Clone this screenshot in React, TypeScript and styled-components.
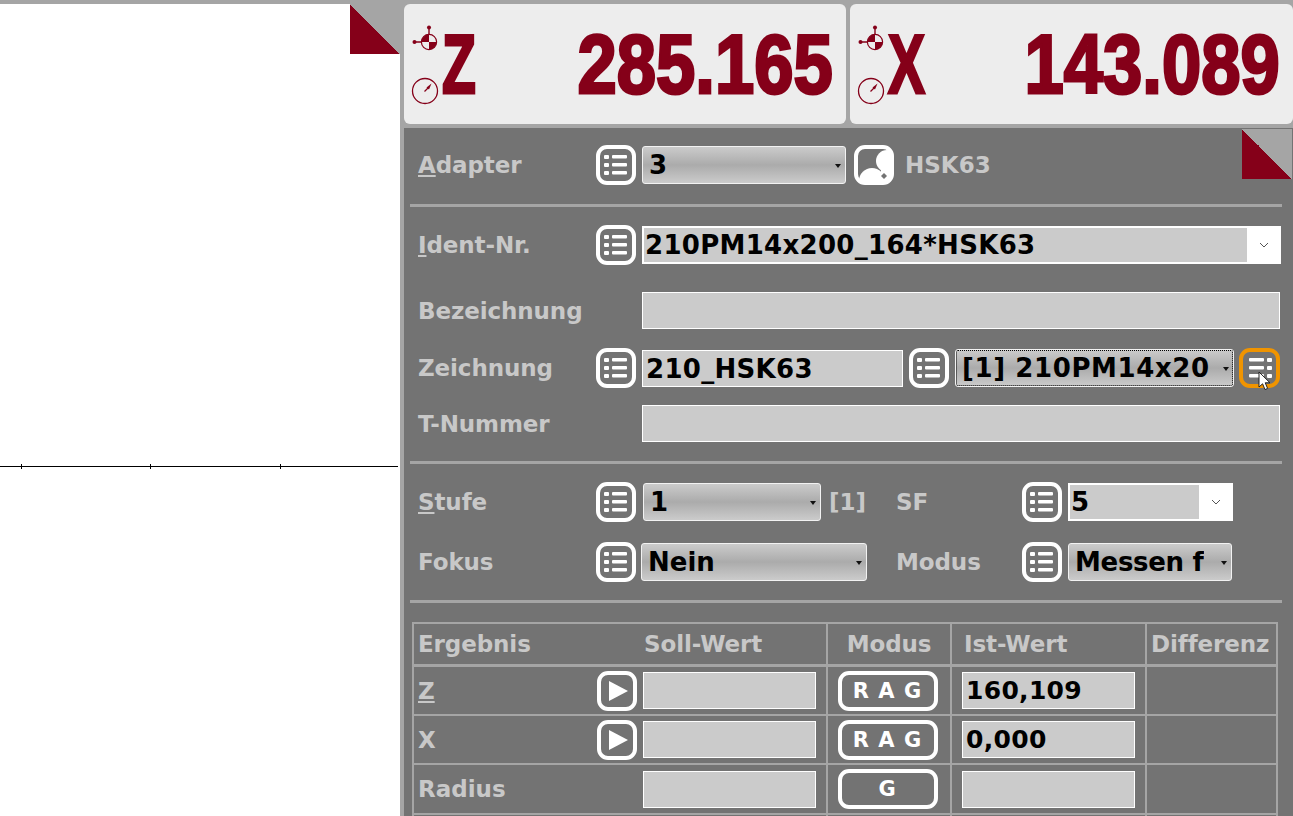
import React from 'react';
import styled, { createGlobalStyle } from 'styled-components';

const GlobalStyle = createGlobalStyle`
    html, body {
        margin: 0;
        height: 816px;
        overflow: hidden;
        background: #a5a5a5;
    }
    * {
        box-sizing: border-box;
    }
`;

const RED = '#850019';
const TEXT = '#c8c8c8';
const LINE = '#a5a5a5';
const FONT = '"DejaVu Sans", Verdana, sans-serif';

const ListIcon = ({ mirrored }: { mirrored?: boolean }) => (
    <svg width="24" height="20" viewBox="0 0 24 20" fill="#fff">
        <g transform={mirrored ? 'translate(24 0) scale(-1 1)' : undefined}>
            <rect x="0" y="0" width="5" height="4" rx="1" />
            <rect x="0" y="8" width="5" height="4" rx="1" />
            <rect x="0" y="16" width="5" height="4" rx="1" />
            <rect x="8" y="0" width="15" height="3.5" rx="1" />
            <rect x="8" y="8" width="15" height="3.5" rx="1" />
            <rect x="8" y="16" width="15" height="3.5" rx="1" />
        </g>
    </svg>
);

const ChevronDown = () => (
    <svg width="10" height="6" viewBox="0 0 10 6">
        <path d="M1 1L5 5L9 1" fill="none" stroke="#555" strokeWidth="1" />
    </svg>
);

const Crosshair = () => (
    <svg width="34" height="34" viewBox="0 0 34 34">
        <circle cx="17" cy="17" r="7.6" fill="none" stroke={RED} strokeWidth="1.2" />
        <path d="M17 17V9.4A7.6 7.6 0 0 0 9.4 17Z" fill={RED} />
        <path d="M17 17V24.6A7.6 7.6 0 0 0 24.6 17Z" fill={RED} />
        <path d="M17 9V2M9 17H2" stroke={RED} strokeWidth="1.4" />
        <circle cx="17" cy="2.5" r="2" fill={RED} />
        <circle cx="2.5" cy="17" r="2" fill={RED} />
    </svg>
);

const Gauge = () => (
    <svg width="28" height="28" viewBox="0 0 28 28">
        <circle cx="14" cy="14" r="12.5" fill="none" stroke={RED} strokeWidth="1.3" />
        <path d="M13.5 14.5L17 11" stroke={RED} strokeWidth="1.2" />
        <path d="M15.5 10.5L20.5 6.5L18 12.5Z" fill={RED} />
    </svg>
);

const Cursor = () => (
    <svg width="14" height="20" viewBox="0 0 14 20">
        <path d="M1 1V16L4.6 12.8L7 18.6L9.6 17.4L7.2 11.8H12Z" fill="#fff" stroke="#222" strokeWidth="1" />
    </svg>
);

const HolderIcon = () => (
    <svg width="40" height="40" viewBox="0 0 40 40">
        <defs>
            <clipPath id="holder-clip">
                <rect x="2" y="2" width="36" height="36" rx="9" />
            </clipPath>
        </defs>
        <g clipPath="url(#holder-clip)">
            <rect width="40" height="40" fill="#737373" />
            <circle cx="33" cy="16" r="11" fill="#fff" />
            <path d="M27 23H40V40H27Z" fill="#fff" />
            <circle cx="18" cy="36" r="13" fill="#fff" />
            <path d="M27 31L30 28L33 31L30 34Z" fill="#737373" />
        </g>
        <rect x="2" y="2" width="36" height="36" rx="9" fill="none" stroke="#fff" strokeWidth="4" />
    </svg>
);

const Readout = ({ axis, value }: { axis: string; value: string }) => (
    <Card>
        <CardIcons>
            <Crosshair />
            <Gauge />
        </CardIcons>
        <AxisLetter>{axis}</AxisLetter>
        <Digits>{value}</Digits>
    </Card>
);

const ResultRow = ({ name, play, mode, value }: { name: React.ReactNode; play?: boolean; mode: string; value?: string }) => (
    <>
        <ResultCell>
            <RowName>{name}</RowName>
            {play && (
                <PlayButton>
                    <PlayGlyph />
                </PlayButton>
            )}
            <Field $width={173} $height={37} />
        </ResultCell>
        <ModeCell>
            <ModeButton>{mode}</ModeButton>
        </ModeCell>
        <ValueCell>
            <Field $width={173} $height={37} $size={25}>
                {value}
            </Field>
        </ValueCell>
        <BodyCell />
    </>
);

const App = (): React.ReactElement => {
    return (
        <Page>
            <GlobalStyle />
            <ChartPanel>
                <Corner />
                <Axis>
                    <Tick $left={21} />
                    <Tick $left={128} />
                    <Tick $left={129} />
                </Axis>
            </ChartPanel>
            <RightColumn>
                <Readouts>
                    <Readout axis="Z" value="285.165" />
                    <Readout axis="X" value="143.089" />
                </Readouts>
                <Panel>
                    <PanelCorner />
                    <Row $height={40} $top={16}>
                        <Label>
                            <u>A</u>dapter
                        </Label>
                        <IconButton>
                            <ListIcon />
                        </IconButton>
                        <Inline>
                            <Select $width={204}>
                                <SelectText>3</SelectText>
                                <Caret />
                            </Select>
                            <ToolIcon>
                                <HolderIcon />
                            </ToolIcon>
                            <Value>HSK63</Value>
                        </Inline>
                    </Row>
                    <Divider $top={19} />
                    <Row $height={40} $top={18}>
                        <Label>
                            <u>I</u>dent-Nr.
                        </Label>
                        <IconButton>
                            <ListIcon />
                        </IconButton>
                        <Combo>
                            <ComboText>210PM14x200_164*HSK63</ComboText>
                            <ComboArrow>
                                <ChevronDown />
                            </ComboArrow>
                        </Combo>
                    </Row>
                    <Row $height={37} $top={27}>
                        <Label>Bezeichnung</Label>
                        <FieldSlot>
                            <Field />
                        </FieldSlot>
                    </Row>
                    <Row $height={40} $top={19}>
                        <Label>Zeichnung</Label>
                        <IconButton>
                            <ListIcon />
                        </IconButton>
                        <Inline>
                            <Field $width={261} $height={37}>
                                210_HSK63
                            </Field>
                            <IconButton>
                                <ListIcon />
                            </IconButton>
                            <Select $width={279} $focused>
                                <SelectText $spacing={0.6}>[1] 210PM14x20</SelectText>
                                <Caret />
                            </Select>
                            <ActiveButton>
                                <ListIcon mirrored />
                                <CursorMark>
                                    <Cursor />
                                </CursorMark>
                            </ActiveButton>
                        </Inline>
                    </Row>
                    <Row $height={37} $top={17}>
                        <Label>T-Nummer</Label>
                        <FieldSlot>
                            <Field />
                        </FieldSlot>
                    </Row>
                    <Divider $top={19} />
                    <Row $height={40} $top={18}>
                        <Label>
                            <u>S</u>tufe
                        </Label>
                        <IconButton>
                            <ListIcon />
                        </IconButton>
                        <TwoUp>
                            <Inline>
                                <Select $width={178} $shift={1}>
                                    <SelectText>1</SelectText>
                                    <Caret />
                                </Select>
                                <Value $gap={2}>[1]</Value>
                            </Inline>
                            <SideLabel>SF</SideLabel>
                            <IconButton>
                                <ListIcon />
                            </IconButton>
                            <Combo $width={165}>
                                <ComboText>5</ComboText>
                                <ComboArrow>
                                    <ChevronDown />
                                </ComboArrow>
                            </Combo>
                        </TwoUp>
                    </Row>
                    <Row $height={40} $top={20}>
                        <Label>Fokus</Label>
                        <IconButton>
                            <ListIcon />
                        </IconButton>
                        <TwoUp>
                            <Select $width={226} $shift={-1}>
                                <SelectText>Nein</SelectText>
                                <Caret />
                            </Select>
                            <SideLabel>Modus</SideLabel>
                            <IconButton>
                                <ListIcon />
                            </IconButton>
                            <Select $width={164}>
                                <SelectText $spacing={-0.3}>Messen f</SelectText>
                                <Caret />
                            </Select>
                        </TwoUp>
                    </Row>
                    <Divider $top={18} />
                    <ResultTable>
                        <HeadCell $pad={4}>
                            <HeadFirst>Ergebnis</HeadFirst>
                            Soll-Wert
                        </HeadCell>
                        <HeadCell $center>Modus</HeadCell>
                        <HeadCell $pad={12}>Ist-Wert</HeadCell>
                        <HeadCell $pad={4}>Differenz</HeadCell>

                        <ResultRow name={<u>Z</u>} play mode="R A G" value="160,109" />
                        <ResultRow name="X" play mode="R A G" value="0,000" />
                        <ResultRow name="Radius" mode="G" />

                        <BodyCell />
                        <BodyCell />
                        <BodyCell />
                        <BodyCell />
                    </ResultTable>
                </Panel>
            </RightColumn>
        </Page>
    );
};

export default App;

const Page = styled.div`
    display: flex;
    height: 816px;
    padding-top: 4px;
    font-family: ${FONT};
    overflow: hidden;
`;

const ChartPanel = styled.section`
    position: relative;
    width: 400px;
    height: 812px;
    padding-top: 462px;
    background: #fff;
    flex-shrink: 0;
`;

const Corner = styled.div`
    position: absolute;
    top: 0;
    right: 0;
    width: 50px;
    height: 50px;
    background: linear-gradient(45deg, ${RED} 50%, #a5a5a5 50%);
`;

const PanelCorner = styled(Corner)`
    top: 1px;
    right: 5px;
`;

const Axis = styled.div`
    display: flex;
    width: 398px;
    height: 1px;
    background: #000;
`;

const Tick = styled.div<{ $left: number }>`
    width: 1px;
    height: 5px;
    margin-top: -2px;
    margin-left: ${(p) => p.$left}px;
    background: #000;
`;

const RightColumn = styled.div`
    width: 893px;
    margin-left: 4px;
    flex-shrink: 0;
`;

const Readouts = styled.div`
    display: grid;
    grid-template-columns: 442px 443px;
    gap: 4px;
`;

const Card = styled.div`
    display: flex;
    align-items: center;
    height: 120px;
    padding: 0 13px 0 7px;
    background: #ededed;
    border-radius: 6px;
    overflow: hidden;
`;

const CardIcons = styled.div`
    display: flex;
    flex-direction: column;
    align-items: flex-start;
    gap: 18px;
    width: 31px;
    margin-top: 2px;
    flex-shrink: 0;

    svg:first-child {
        margin-left: 1px;
    }
`;

const AxisLetter = styled.div`
    color: ${RED};
    font: bold 84px/120px 'Liberation Sans', Arial, sans-serif;
    -webkit-text-stroke: 3px ${RED};
    transform: scaleX(0.66);
    transform-origin: left center;
`;

const Digits = styled.div`
    margin-left: auto;
    color: ${RED};
    font: bold 84px/120px 'Liberation Sans', Arial, sans-serif;
    -webkit-text-stroke: 3px ${RED};
    transform: scaleX(0.84);
    transform-origin: right center;
`;

const Panel = styled.main`
    position: relative;
    height: 688px;
    margin-top: 4px;
    padding: 1px 0 0 6px;
    background: #737373;
`;

const Row = styled.div<{ $height: number; $top: number }>`
    display: grid;
    grid-template-columns: 186px 46px 1fr;
    align-items: center;
    width: 877px;
    height: ${(p) => p.$height}px;
    margin-top: ${(p) => p.$top}px;
`;

const Label = styled.div`
    padding-left: 8px;
    color: ${TEXT};
    font-size: 23px;
    font-weight: bold;
    letter-spacing: -0.1px;
    white-space: nowrap;
`;

const SideLabel = styled(Label)`
    margin-left: -1px;
    padding-left: 0;
`;

const IconButton = styled.button`
    display: flex;
    align-items: center;
    justify-content: center;
    width: 40px;
    height: 40px;
    padding: 0;
    background: transparent;
    border: 4px solid #fff;
    border-radius: 11px;
    flex-shrink: 0;
`;

const ActiveButton = styled(IconButton)`
    position: relative;
    width: 41px;
    margin-left: -1px;
    border-color: #f09400;
`;

const CursorMark = styled.div`
    position: absolute;
    left: 15px;
    top: 19px;
    line-height: 0;
`;

const Inline = styled.div`
    display: flex;
    align-items: center;
    gap: 6px;
    min-width: 0;
`;

const FieldSlot = styled.div`
    grid-column: 3;
`;

const Select = styled.div<{ $width: number; $focused?: boolean; $shift?: number }>`
    position: relative;
    display: flex;
    align-items: center;
    justify-content: space-between;
    width: ${(p) => p.$width}px;
    height: 38px;
    margin-left: ${(p) => p.$shift ?? 0}px;
    padding: 0 4px 0 6px;
    background: linear-gradient(#cbcbcb, #ababab 50%, #cbcbcb);
    border: 1.5px solid #f2f2f2;
    border-radius: 3px;
    outline: ${(p) => (p.$focused ? '1px dotted #000' : 'none')};
    outline-offset: -2px;
    flex-shrink: 0;
`;

const SelectText = styled.span<{ $spacing?: number }>`
    color: #000;
    font-size: 26px;
    font-weight: bold;
    letter-spacing: ${(p) => p.$spacing ?? 0}px;
    white-space: nowrap;
    overflow: hidden;
`;

const Caret = styled.span`
    width: 0;
    height: 0;
    margin-top: 2px;
    border-left: 3.5px solid transparent;
    border-right: 3.5px solid transparent;
    border-top: 4px solid #111;
    flex-shrink: 0;
`;

const ToolIcon = styled.div`
    width: 40px;
    height: 40px;
    margin-left: 2px;
    line-height: 0;
`;

const Value = styled.span<{ $gap?: number }>`
    margin-left: ${(p) => p.$gap ?? 5}px;
    color: ${TEXT};
    font-size: 23px;
    font-weight: bold;
`;

const Combo = styled.div<{ $width?: number }>`
    display: flex;
    align-items: stretch;
    width: ${(p) => p.$width ?? 639}px;
    height: 38px;
    background: #cbcbcb;
    border: 2px solid #fff;
    border-right: 0;
`;

const ComboText = styled.span`
    flex: 1;
    padding-left: 1px;
    color: #000;
    font-size: 26px;
    font-weight: bold;
    letter-spacing: 0.3px;
    line-height: 34px;
    white-space: nowrap;
`;

const ComboArrow = styled.span`
    display: flex;
    align-items: center;
    justify-content: center;
    width: 34px;
    background: #fff;
`;

const Field = styled.div<{ $width?: number; $height?: number; $size?: number }>`
    width: ${(p) => p.$width ?? 638}px;
    height: ${(p) => p.$height ?? 37}px;
    padding-left: 3px;
    color: #000;
    background: #cbcbcb;
    border: 1px solid #fff;
    font-size: ${(p) => p.$size ?? 26}px;
    font-weight: bold;
    letter-spacing: 0.3px;
    line-height: 36px;
    white-space: nowrap;
    flex-shrink: 0;
`;

const Divider = styled.hr<{ $top: number }>`
    width: 872px;
    height: 3px;
    margin: ${(p) => p.$top}px 0 0;
    background: ${LINE};
    border: 0;
`;

const TwoUp = styled.div`
    display: grid;
    grid-template-columns: 255px 125px 46px 1fr;
    align-items: center;
`;

const ResultTable = styled.div`
    display: grid;
    grid-template-columns: 414px 124px 195px 131px;
    grid-template-rows: 43px 49px 49px 50px 49px;
    width: 866px;
    margin: 19px 0 0 2px;
    border-top: 2px solid ${LINE};
    border-left: 2px solid ${LINE};
`;

const HeadCell = styled.div<{ $pad?: number; $center?: boolean }>`
    display: flex;
    justify-content: ${(p) => (p.$center ? 'center' : 'flex-start')};
    padding-left: ${(p) => p.$pad ?? 0}px;
    color: ${TEXT};
    font-size: 23px;
    font-weight: bold;
    letter-spacing: -0.1px;
    line-height: 40px;
    border-right: 2px solid ${LINE};
    border-bottom: 3px solid ${LINE};
    white-space: nowrap;
`;

const HeadFirst = styled.span`
    width: 226px;
`;

const BodyCell = styled.div`
    border-right: 2px solid ${LINE};
    border-bottom: 2px solid ${LINE};
`;

const ResultCell = styled(BodyCell)`
    display: flex;
    align-items: center;
    justify-content: flex-end;
    gap: 6px;
    padding-right: 10px;
`;

const RowName = styled.span`
    margin-right: auto;
    padding-left: 4px;
    color: ${TEXT};
    font-size: 23px;
    font-weight: bold;
`;

const PlayButton = styled(IconButton)``;

const PlayGlyph = styled.span`
    width: 0;
    height: 0;
    margin-left: 3px;
    border-top: 10px solid transparent;
    border-bottom: 10px solid transparent;
    border-left: 19px solid #fff;
`;

const ModeCell = styled(BodyCell)`
    display: flex;
    align-items: center;
    justify-content: center;
    padding-right: 3px;
`;

const ModeButton = styled.button`
    width: 100px;
    height: 40px;
    padding: 0;
    color: #fff;
    background: transparent;
    border: 4px solid #fff;
    border-radius: 11px;
    font-family: ${FONT};
    font-size: 21px;
    font-weight: bold;
    letter-spacing: 1px;
    line-height: 30px;
`;

const ValueCell = styled(BodyCell)`
    display: flex;
    align-items: center;
    padding-left: 10px;
`;
